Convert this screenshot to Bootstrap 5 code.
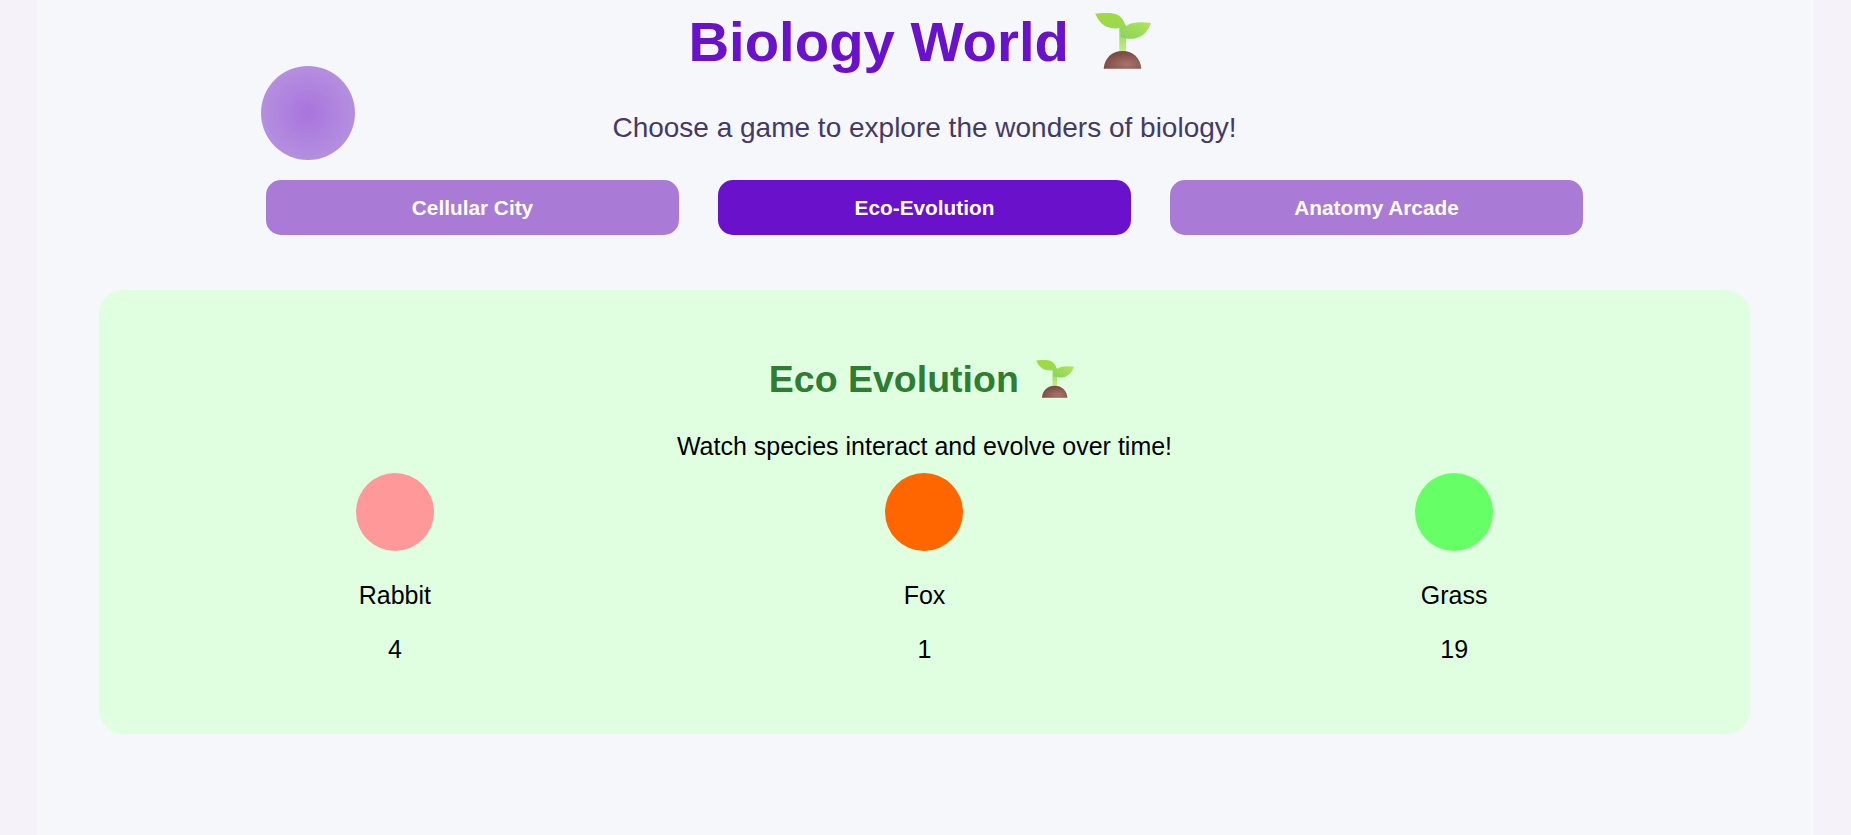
<!doctype html>
<html lang="en">

<head>
  <meta charset="utf-8" />
  <meta name="viewport" content="width=device-width, initial-scale=1" />
  <title>Biology World</title>
  <link href="https://cdn.jsdelivr.net/npm/bootstrap@5.3.0/dist/css/bootstrap.min.css" rel="stylesheet" />
  <style>
    body {
      background-color: #f5f2fa;
      font-family: "Liberation Sans", Arial, sans-serif;
      height: 835px;
      overflow: hidden;
    }

    .page-shell {
      width: 1776px;
      height: 835px;
      margin-left: 37px;
      padding-right: 1px;
      background-color: #f5f7fb;
      position: relative;
    }

    .page-title {
      color: #6a11cb;
      font-size: 56.3px;
      font-weight: 700;
      line-height: 64px;
      margin: 0;
      padding-top: 10px;
    }

    .page-subtitle {
      color: #453a63;
      font-size: 28px;
      line-height: 32px;
      margin: 38px 0 0;
    }

    .blob {
      position: absolute;
      left: 224px;
      top: 66px;
      width: 94px;
      height: 94px;
      border-radius: 50%;
      background: radial-gradient(circle, #a874dd 0%, #b99ae0 100%);
    }

    .game-tabs {
      gap: 39px;
      margin-top: 36px;
    }

    .game-tab {
      width: 413px;
      height: 55px;
      border: 0;
      border-radius: 15px;
      color: #fff;
      font-size: 20.8px;
      font-weight: 700;
      background-color: #aa7ad7;
    }

    .game-tab.is-active {
      background-color: #6a11cb;
    }

    .eco-panel {
      width: 1651px;
      height: 444px;
      margin: 55px auto 0;
      padding: 66px 31px 0;
      border-radius: 24px;
      background-color: #e0ffe0;
    }

    .eco-title {
      color: #2e7d32;
      font-size: 37.5px;
      font-weight: 700;
      line-height: 46px;
      margin: 0;
    }

    .eco-intro {
      font-size: 25px;
      line-height: 28px;
      color: #000;
      margin: 30px 0 0;
    }

    .species-dot {
      width: 78px;
      height: 78px;
      border-radius: 50%;
      margin: 13px auto 0;
    }

    .species-name,
    .species-count {
      font-size: 25px;
      line-height: 28px;
      color: #000;
      margin: 0;
    }

    .species-name {
      margin-top: 30px;
    }

    .species-count {
      margin-top: 26px;
    }

    .sprout-big {
      width: 56px;
      height: 56px;
      margin: 0 10px;
      vertical-align: -8px;
    }

    .sprout-small {
      width: 38px;
      height: 38px;
      margin: 0 6.5px;
      vertical-align: -6px;
    }
  </style>
</head>

<body>
  <svg width="0" height="0" class="d-block">
    <defs>
      <linearGradient id="leafLeft" x1="0" y1="0" x2="1" y2="1">
        <stop offset="0" stop-color="#a5d93a" />
        <stop offset="1" stop-color="#94dc58" />
      </linearGradient>
      <linearGradient id="leafRight" x1="1" y1="0" x2="0" y2="1">
        <stop offset="0" stop-color="#b5e35a" />
        <stop offset="1" stop-color="#86d45a" />
      </linearGradient>
      <linearGradient id="stemFill" x1="0" y1="0" x2="0" y2="1">
        <stop offset="0" stop-color="#84d456" />
        <stop offset="1" stop-color="#c9ef80" />
      </linearGradient>
      <radialGradient id="soilFill" cx="0.62" cy="0.75" r="0.65">
        <stop offset="0" stop-color="#a9736b" />
        <stop offset="1" stop-color="#7c4c45" />
      </radialGradient>
      <symbol id="sprout" viewBox="0 0 56 56">
        <path d="M24.3 12h6.7v28h-6.7z" fill="url(#stemFill)" />
        <path d="M.3.7C6 0 12-.3 17 .2 24 1 29.500 6 30.500 14 24 16 15 16 10 13 5 10 2 5 .3.7z" fill="url(#leafLeft)" />
        <path d="M56 10C50 9 43 9 38 10 31 11.500 27 16 25.500 24 31 26 38 26.500 43 24.500 50 22 54 16 56 10z" fill="url(#leafRight)" />
        <path d="M8.700 55.700C9.500 45 17 38 27.500 38S45.500 45 46.300 55.700z" fill="url(#soilFill)" />
      </symbol>
    </defs>
  </svg>

  <div class="page-shell text-center">
    <div class="blob"></div>
    <h1 class="page-title">Biology World <svg class="sprout-big">
        <use href="#sprout" />
      </svg></h1>
    <p class="page-subtitle">Choose a game to explore the wonders of biology!</p>

    <div class="game-tabs d-flex justify-content-center">
      <button class="game-tab" type="button">Cellular City</button>
      <button class="game-tab is-active" type="button">Eco-Evolution</button>
      <button class="game-tab" type="button">Anatomy Arcade</button>
    </div>

    <div class="eco-panel">
      <h2 class="eco-title">Eco Evolution <svg class="sprout-small">
          <use href="#sprout" />
        </svg></h2>
      <p class="eco-intro">Watch species interact and evolve over time!</p>
      <div class="row g-0">
        <div class="col-4">
          <div class="species-dot" style="background-color: #ff9999"></div>
          <p class="species-name">Rabbit</p>
          <p class="species-count">4</p>
        </div>
        <div class="col-4">
          <div class="species-dot" style="background-color: #ff6600"></div>
          <p class="species-name">Fox</p>
          <p class="species-count">1</p>
        </div>
        <div class="col-4">
          <div class="species-dot" style="background-color: #66ff66"></div>
          <p class="species-name">Grass</p>
          <p class="species-count">19</p>
        </div>
      </div>
    </div>
  </div>

  <script src="https://cdn.jsdelivr.net/npm/bootstrap@5.3.0/dist/js/bootstrap.bundle.min.js"></script>
</body>

</html>
